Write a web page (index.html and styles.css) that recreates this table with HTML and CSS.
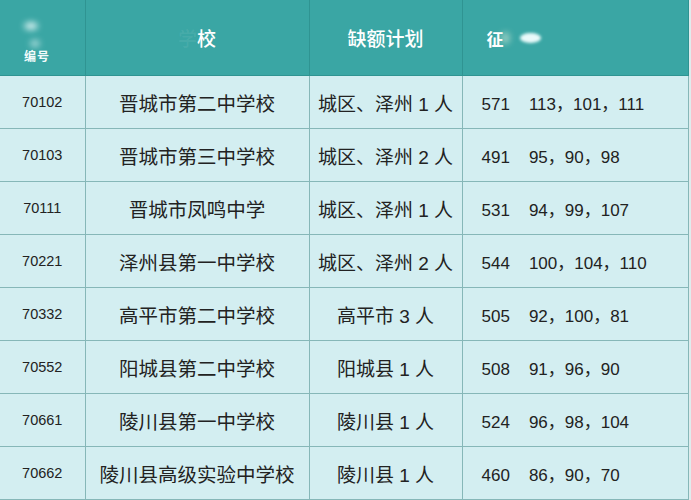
FILE: index.html
```html
<!DOCTYPE html>
<html lang="zh">
<head>
<meta charset="utf-8">
<title>缺额计划</title>
<link rel="stylesheet" href="styles.css">
</head>
<body>
<table class="plan">
  <colgroup>
    <col class="c-code"><col class="c-school"><col class="c-quota"><col class="c-score">
  </colgroup>
  <thead>
    <tr>
      <th class="h-code"><span class="blob b1"></span><span class="blob b2"></span><span class="code-label">编号</span></th>
      <th><span class="faded">学</span>校</th>
      <th>缺额计划</th>
      <th class="h-score"><span class="zheng">征</span><span class="blob b3"></span><span class="blob b4"></span></th>
    </tr>
  </thead>
  <tbody>
    <tr><td class="code">70102</td><td class="name">晋城市第二中学校</td><td class="quota">城区、泽州 1 人</td><td class="score"><span class="total">571</span>113，101，111</td></tr>
    <tr><td class="code">70103</td><td class="name">晋城市第三中学校</td><td class="quota">城区、泽州 2 人</td><td class="score"><span class="total">491</span>95，90，98</td></tr>
    <tr><td class="code">70111</td><td class="name">晋城市凤鸣中学</td><td class="quota">城区、泽州 1 人</td><td class="score"><span class="total">531</span>94，99，107</td></tr>
    <tr><td class="code">70221</td><td class="name">泽州县第一中学校</td><td class="quota">城区、泽州 2 人</td><td class="score"><span class="total">544</span>100，104，110</td></tr>
    <tr><td class="code">70332</td><td class="name">高平市第二中学校</td><td class="quota">高平市 3 人</td><td class="score"><span class="total">505</span>92，100，81</td></tr>
    <tr><td class="code">70552</td><td class="name">阳城县第二中学校</td><td class="quota">阳城县 1 人</td><td class="score"><span class="total">508</span>91，96，90</td></tr>
    <tr><td class="code">70661</td><td class="name">陵川县第一中学校</td><td class="quota">陵川县 1 人</td><td class="score"><span class="total">524</span>96，98，104</td></tr>
    <tr><td class="code">70662</td><td class="name">陵川县高级实验中学校</td><td class="quota">陵川县 1 人</td><td class="score"><span class="total">460</span>86，90，70</td></tr>
  </tbody>
</table>
</body>
</html>
```

FILE: styles.css
```css
html, body {
  margin: 0;
  padding: 0;
}
body {
  background: #dfeced;
  font-family: "Liberation Sans", "Noto Sans CJK SC", sans-serif;
  color: #222;
  overflow: hidden;
}
.plan {
  width: 688px;
  border-collapse: collapse;
  table-layout: fixed;
  background: #d3eef1;
}
.c-code { width: 85px; }
.c-school { width: 224px; }
.c-quota { width: 153px; }
.c-score { width: 226px; }

.plan th {
  height: 75px;
  padding: 0;
  background: #3aa6a4;
  color: #fff;
  font-family: "Noto Sans CJK SC", sans-serif;
  font-weight: 500;
  font-size: 19px;
  text-align: center;
  border: 1px solid #2f9492;
  border-top: none;
  position: relative;
}
.plan th:first-child { border-left: none; }
.faded { color: rgba(255,255,255,0.08); }
.plan th.h-code { overflow: hidden; }
.code-label {
  position: absolute;
  left: 24px;
  top: 47px;
  font-size: 12px;
  font-weight: 700;
  letter-spacing: 1px;
  color: #f2fbfb;
}
.blob {
  position: absolute;
  background: #f4ffff;
  border-radius: 50%;
  filter: blur(3px);
}
.b1 { left: 24px; top: 22px; width: 14px; height: 8px; opacity: 0.8; }
.b2 { left: 30px; top: 40px; width: 10px; height: 7px; opacity: 0.6; }
.plan th.h-score { text-align: left; }
.zheng {
  margin-left: 24px;
  font-size: 17px;
  font-weight: 700;
}
.b3 { left: 38px; top: 32px; width: 9px; height: 12px; opacity: 0.5; background: #f2f6e0; }
.b4 { left: 57px; top: 33px; width: 21px; height: 10px; opacity: 0.95; filter: blur(1.5px); }

.plan td {
  height: 52px;
  padding: 0;
  border: 1px solid #86b7b8;
  text-align: center;
  white-space: nowrap;
}
.plan td:first-child { border-left: none; }
.code {
  font-size: 14.5px;
}
.name {
  font-family: "Noto Sans CJK SC", sans-serif;
  font-size: 19.5px;
}
.quota {
  font-family: "Liberation Sans", "Noto Sans CJK SC", sans-serif;
  font-size: 19px;
}
.plan td.score {
  text-align: left;
  padding-left: 19px;
  font-size: 17px;
}
.total {
  display: inline-block;
  margin-right: 19px;
}
```
